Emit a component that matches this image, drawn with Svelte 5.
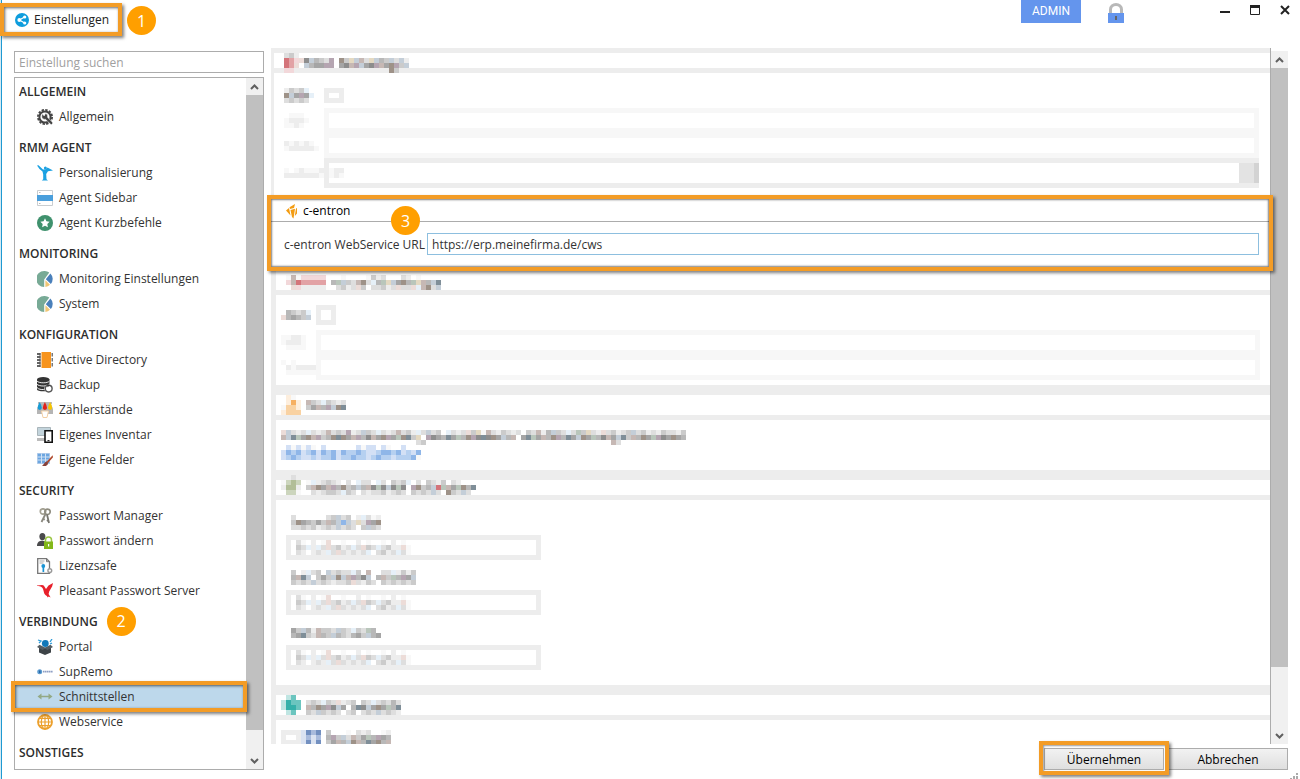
<script>
    let search = '';
    let url = 'https://erp.meinefirma.de/cws';
    let selected = 'Schnittstellen';

    const groups = [
        { title: 'ALLGEMEIN', items: [['Allgemein', 'gear']] },
        { title: 'RMM AGENT', items: [['Personalisierung', 'person'], ['Agent Sidebar', 'sidebar'], ['Agent Kurzbefehle', 'star']] },
        { title: 'MONITORING', items: [['Monitoring Einstellungen', 'pie'], ['System', 'pie']] },
        { title: 'KONFIGURATION', items: [['Active Directory', 'book'], ['Backup', 'backup'], ['Zählerstände', 'printer'], ['Eigenes Inventar', 'devices'], ['Eigene Felder', 'fields']] },
        { title: 'SECURITY', items: [['Passwort Manager', 'keys'], ['Passwort ändern', 'userlock'], ['Lizenzsafe', 'license'], ['Pleasant Passwort Server', 'bird']] },
        { title: 'VERBINDUNG', badge: 2, items: [['Portal', 'portal'], ['SupRemo', 'supremo'], ['Schnittstellen', 'arrows'], ['Webservice', 'globe']] },
        { title: 'SONSTIGES', items: [] }
    ];

    const icons = {
        gear: '<circle cx="8" cy="8" r="5.6" fill="none" stroke="#444" stroke-width="2"/><circle cx="8" cy="8" r="7.1" fill="none" stroke="#444" stroke-width="1.8" stroke-dasharray="2.4 1.32"/><path d="M5.200 4.800l2 2.200 1.300-2.500a3 3 0 0 1 2 3.700l5.500 5.800-1.800 1.800-5.700-5.500A3 3 0 0 1 4.800 7z" fill="#444" stroke="#fff" stroke-width=".5"/>',
        person: '<path d="M0 .5l1.500-.2L6 4.500l3-.2 1.500-1.800L16 5.500l-5 .8-1.800 2.700.3 5.300 1.500 1.200H4.800l1.400-1.200V9.500L5.500 6.500 2.500 4z" fill="#1ba1e2"/><circle cx="8.400" cy="3" r="1.500" fill="#1ba1e2"/>',
        sidebar: '<path d="M.5.5h15v15H.5z" fill="#fff" stroke="#c9cdd0"/><path d="M0 5h16v6H0z" fill="#4a9fdc"/><path d="M2 2.5h1.500M2 13.500h1.500" stroke="#bbb"/>',
        star: '<circle cx="8" cy="8" r="8" fill="#3f916d"/><path d="M8 3.300l1.400 3 3.200.4-2.300 2.300.6 3.300L8 10.800l-2.900 1.500.6-3.300-2.300-2.300 3.200-.4z" fill="#fff"/>',
        pie: '<path d="M7.200 0A8 8 0 0 0 7.200 16V8.400L12.300 1.600A8 8 0 0 0 7.200 0z" fill="#78aa96"/><path d="M13.400 2.400a8 8 0 0 1 .5 10.600L8.800 8.200z" fill="#4a80bb"/><path d="M8.400 9.300l4.600 4.500A8 8 0 0 1 8.400 16z" fill="#f0c674"/>',
        book: '<path d="M4.500 0H14v16H4.500z" fill="#f7941d"/><path d="M14.500 1H16v3.500h-1.500zM14.500 6H16v3.500h-1.500zM14.500 11H16v3.500h-1.500z" fill="#777"/><path d="M0 2h3.500M0 5h3.500M0 8h3.500M0 11h3.500M0 14h3.500" stroke="#333" stroke-width="1.500"/><path d="M3 1v14" stroke="#555"/>',
        backup: '<path d="M0 2.500v9.800C0 15 12.500 15 12.500 12.300V2.500z" fill="#333"/><ellipse cx="6.200" cy="2.600" rx="6.200" ry="2.600" fill="#333"/><path d="M0 4c1.500 2.400 11 2.400 12.500 0M0 7.200c1.500 2.400 11 2.400 12.500 0M0 10.500c1.500 2.400 7 2.400 8 1.600" fill="none" stroke="#fff" stroke-width=".9"/><circle cx="11.700" cy="11.600" r="4.400" fill="#fff"/><circle cx="11.700" cy="11.600" r="3.400" fill="none" stroke="#555" stroke-width="1.400"/><path d="M10 6.800l3 1.400-2.400 2z" fill="#333"/>',
        printer: '<path d="M2 2h12l2 5v5H0V7z" fill="#b5b5b5"/><path d="M1 0h14v2H1z" fill="#bbb"/><path d="M2.700 0q4.200 7.500 0 8-4.200-.5 0-8z" fill="#169bd5"/><path d="M7.900 0q4.200 7.500 0 8-4.200-.5 0-8z" fill="#e2231a"/><path d="M13.100 0q4.200 7.500 0 8-4.200-.5 0-8z" fill="#f6c500"/><path d="M4.500 9h7L10 15.500H6z" fill="#fff" stroke="#f3cfa4"/>',
        devices: '<path d="M.5.5h13v8H.5z" fill="#c3d4dc" stroke="#a9b5ba"/><path d="M0 11h8v3H0z" fill="#bbb"/><path d="M8 3.800h7.200V15.200H8z" fill="#fff" stroke="#111" stroke-width="1.600"/><path d="M10.500 13.600h2" stroke="#111"/>',
        fields: '<path d="M.5 1.500h12v10H.5z" fill="#6ca6e0" stroke="#a9c6e8"/><path d="M.5 5h12M.5 8h12M4.500 1.500v10M8.500 1.500v10" stroke="#cfe1f5"/><path d="M15.600 3.200L9.400 10l1.400 1.300 5.200-6z" fill="#b04a2e"/><path d="M9.400 9.600c-2 .4-2 3.200-4.400 3.800 2.600 1.600 6 .2 6-2.200z" fill="#86413a"/>',
        keys: '<circle cx="6" cy="3.500" r="2.700" fill="none" stroke="#a5a294" stroke-width="1.700"/><circle cx="10.500" cy="3.800" r="2.700" fill="none" stroke="#8f8d80" stroke-width="1.700"/><path d="M8.500 6L4.500 14M6 10.800l1.800 1" stroke="#8b897f" stroke-width="1.800"/><path d="M10 6.500l2 8.500M11.800 12l-2 .8" stroke="#77766f" stroke-width="1.800"/>',
        userlock: '<ellipse cx="5.400" cy="3.600" rx="3" ry="3.600" fill="#4a4a4c"/><path d="M0 13c0-4 2.600-5.200 5.400-5.200 1.200 0 2 .2 2.600.6V13z" fill="#4a4a4c"/><path d="M8.500 9V7a3 3 0 0 1 6 0v2" fill="none" stroke="#9cc746" stroke-width="1.500"/><path d="M7 8.500h9V16H7z" fill="#83b81a"/><path d="M11 11h1.200v2.600H11z" fill="#fff"/>',
        license: '<path d="M.7.7h8.800l3 3v11.600H.7z" fill="#fff" stroke="#777" stroke-width="1.300"/><path d="M9.500.7v3h3" fill="none" stroke="#777"/><path d="M2.500 3h5M2.500 5h4" stroke="#aaa"/><circle cx="6.300" cy="8" r="1.900" fill="#1b93d3"/><path d="M5.500 8h1.700v6H5.500z" fill="#1b93d3"/><circle cx="12.800" cy="12.600" r="1.900" fill="#fff" stroke="#999" stroke-width="1.400"/>',
        bird: '<path d="M0 2.400l5-.4c1.400 0 2.200.8 2.700 2L9 6l2.500-3.500L16 0l-.8 3.200-1.400 2.600-1.600 2.700-.6 2.500 2 3.500-2-1-.8 1-1-1.500C6.600 11.500 7 8 5.800 5.500 5 4 4 3 0 2.900z" fill="#e8202b"/>',
        portal: '<path d="M2 7l6 2 6-2v6.500L8 16l-6-2.500z" fill="#3d4347"/><path d="M0 8l2.500-2.200L8 8.500l5.500-2.700L16 8l-5.500 3L8 9.500 5.500 11z" fill="#555d62"/><circle cx="8.300" cy="4.500" r="3.400" fill="#1177b8"/><path d="M1 1l3 1-2 2M15 0l-2 3M13 5l2-1" fill="none" stroke="#2b9ad8" stroke-width="1.300"/>',
        supremo: '<circle cx="2.700" cy="7.700" r="2.500" fill="#5b9bd0"/><path d="M2 6.500h1.500v2.500H2z" fill="#2868a5"/><path d="M6 7.600h10" stroke="#8f9fc4" stroke-width="1.600" stroke-dasharray="1.500 .4"/>',
        arrows: '<path d="M2.500 7.500h11" stroke="#93a985" stroke-width="1.500"/><path d="M4.500 4.500l-4 3 4 3zM11.500 4.500l4 3-4 3z" fill="#93a985"/>',
        globe: '<circle cx="8" cy="8" r="7" fill="#fff" stroke="#eca02c" stroke-width="1.800"/><path d="M8 1v14M1 8h14M2.500 4.300h11M2.500 11.700h11" stroke="#eca02c" stroke-width="1.200"/><ellipse cx="8" cy="8" rx="3.700" ry="7" fill="none" stroke="#eca02c" stroke-width="1.200"/>'
    };

    // one character per 5px cell of an obscured label, '.' stays empty
    const palette = {
        1: '#f8f8f8', 2: '#ededed', 3: '#dedede', 4: '#cbcbcb', 5: '#b8b8b8', 6: '#a5a5a5', 7: '#8d8d8d',
        r: '#c6b8b4', b: '#c4ced8', d: '#7f8e98', y: '#e4d9c2', p: '#b5a5b1', g: '#b9c6bb', n: '#9e9288', l: '#e6f0f8', k: '#ecdcd8',
        R: '#d4747a', Q: '#e2a2a5', P: '#f2d8da',
        O: '#f6b062', N: '#f9d2a2', M: '#fdeedd',
        A: '#8fb6e8', B: '#b6d0f0', C: '#d3e0f5',
        G: '#b2be98', H: '#ccd5bd',
        T: '#35b0a9', U: '#6cc5bf', V: '#bfe5e2',
        S: '#7390c0', W: '#a9bbdc', X: '#dbe3f1'
    };

    const head1 = ['342......................', 'RQPk7b543p.n4ybr3yb54b3b2', 'RQk.b566pp.67rpb67pr6np4b', 'PP.2.................n4..'];
    const head3 = ['1r1PPPPP...1....1423...32.1....', 'PrRQQQQQ.5gb43rn3l5gyb6n5gyr5bd', '.kP22222..3423k4.33423k33klrn3b'];
    const head4 = ['.M1..........', '.MOM.r43l4323', '1NNM.46r5pbnd', 'MNNN.........'];
    const line4 = [
        'kb323l323r343p23b43l323r342l3b34.l323k4y1r324323.43r25b43l3g4y32k34234b3423243324',
        'rbdg6nrp45ndn6rp57r6np6gnd4y.p765d6g5np7d7n6b5r.6dg6r5np5d6bn6g57r6bd4r5n6gp76n65',
        '...........................34.....................................r3.............'
    ];
    const link4 = ['.C1C1C1.C......C1CC.C1..C...', 'CABACBACABACABBABCCBAABACBCA', 'CBABCCBCBBACBBABBCBABBCBBBA1'];
    const head5 = ['..3....................................', '1HGH.1l23432.3.l33.l3.434l.3.4324.32...', '2GG2.4rn6rp5n45b5r7g7b7g7.pn45bRgr6gn5d', '.HH1..323443l43.323342343.4343b3.n43b3.'];
    const label5a = ['.3......34b34.2l312', '.4n65464r5bAb3y3p6n', '.334342343b343.4b43'];
    const label5b = ['.4.2l34.b3433l4.r..33l2424', '.5rdb.464bnbrp57b.5r4g5p6b', '.4343b3432334k3243.4343434'];
    const label5c = ['.64b52r443b43l43g5.', '.56d43r54b543564b56'];
    const value5 = ['.31.2.1k..1..2.1..1.2.1.', '.43l2l3k3423l3k43l3422k1', '.32.232l3k32323l.3423l31'];
    const head6 = ['.VU.....................', 'VTUU.343l43k234.43l34353', 'VTTU.r5n6p7b6.5d7b6n6g5d', '.VU..43b4343.34.343b3432'];
    const head6b = ['4...1.323..12', '5p4b3r46g5p65', '46r5bnr5d6n5r'];

    const tokens = [label5a, label5b, label5c];
</script>

{#snippet mosaic(rows)}
    <svg class="mosaic" width={rows[0].length * 5} height={rows.length * 5} aria-hidden="true">
        {#each rows as row, y}
            {#each row as cell, x}
                {#if palette[cell]}
                    <rect x={x * 5} y={y * 5} width="5" height="5" fill={palette[cell]} />
                {/if}
            {/each}
        {/each}
    </svg>
{/snippet}

{#snippet scrollbar()}
    <div class="scrollbar">
        <button aria-label="Nach oben"><svg width="9" height="6"><path d="M1 5l3.500-3.500L8 5" /></svg></button>
        <div class="thumb"></div>
        <div class="track"></div>
        <button aria-label="Nach unten"><svg width="9" height="6"><path d="M1 1l3.500 3.500L8 1" /></svg></button>
    </div>
{/snippet}

<div class="window">
    <header>
        <div class="tab marked">
            <svg width="14" height="14" viewBox="0 0 14 14">
                <circle cx="7" cy="7" r="7" fill="#0e9ddd" />
                <path d="M9.500 4L4.500 7l5 3" fill="none" stroke="#fff" stroke-width="1.200" />
                <circle cx="4.300" cy="7" r="1.900" fill="#fff" /><circle cx="9.700" cy="4" r="1.600" fill="#fff" /><circle cx="9.700" cy="10" r="1.600" fill="#fff" />
            </svg>
            Einstellungen
        </div>
        <span class="badge">1</span>
        <span class="admin">ADMIN</span>
        <svg class="lock" width="16" height="20" viewBox="0 0 16 20">
            <path d="M2.500 11V6.500a5.500 5 0 0 1 11 0V11" fill="none" stroke="#b8b8b8" stroke-width="3" />
            <path d="M0 10h16v10H0z" fill="#6495ed" /><path d="M7 13h2v4H7z" fill="#666" />
        </svg>
        <div class="controls">
            <button aria-label="Minimieren"><svg width="10" height="10"><path d="M0 7h10" /></svg></button>
            <button aria-label="Maximieren"><svg width="10" height="10"><path d="M.5 0v9.500h9V0" stroke-width="1" /><path d="M0 1.500h10" stroke-width="3" /></svg></button>
            <button aria-label="Schließen"><svg width="10" height="10"><path d="M1 1l8 8M9 1l-8 8" stroke-width="2" /></svg></button>
        </div>
    </header>

    <div class="columns">
        <aside>
            <input class="search" type="text" placeholder="Einstellung suchen" aria-label="Einstellung suchen" bind:value={search} />
            <div class="list">
                <nav>
                    {#each groups as group}
                        <section>
                            <h2>{group.title}{#if group.badge}<span class="badge">{group.badge}</span>{/if}</h2>
                            {#each group.items as [name, icon]}
                                <button class="item" class:selected={selected === name} class:marked={selected === name} on:click={() => (selected = name)}>
                                    <svg width="16" height="16" viewBox="0 0 16 16">{@html icons[icon]}</svg>
                                    {name}
                                </button>
                            {/each}
                        </section>
                    {/each}
                </nav>
                {@render scrollbar()}
            </div>
        </aside>

        <main>
            <div class="settings">
                <div class="panels">
                    <section class="panel first">
                        <h3>{@render mosaic(head1)}</h3>
                        <div class="form wide">
                            <label class="check" for="aktiv1">{@render mosaic(['2434l.', 'nb6p6l', '34343.'])}</label>
                            <input id="aktiv1" class="flat" type="checkbox" />
                            <label for="host">{@render mosaic(['.111.', '12221', '1121.'])}</label>
                            <input id="host" type="text" />
                            <label for="port">{@render mosaic(['212121.', '1222221'])}</label>
                            <input id="port" type="text" />
                            <label for="modus">{@render mosaic(['1.121112.122', '22222221.121'])}</label>
                            <select id="modus"></select>
                        </div>
                    </section>

                    <section class="centron marked">
                        <h3>
                            <svg width="12" height="16" viewBox="0 0 12 16">
                                <path d="M0 7.500L3 5l1.500 7.500zM3.500 4.300L9 1 8 5l-4 1zM4.500 7l4.500-1.200L7.500 15.500 6 14zM10 5.500l1-.5v5.500L8.800 13z" fill="#f39c12" />
                            </svg>
                            c-entron
                        </h3>
                        <span class="badge">3</span>
                        <div class="row">
                            <label for="url">c-entron WebService URL</label>
                            <input id="url" type="text" bind:value={url} />
                        </div>
                    </section>

                    <section class="panel third">
                        <h3>{@render mosaic(head3)}</h3>
                        <div class="form">
                            <label class="check" for="aktiv2">{@render mosaic(['.5434l', 'k5654b'])}</label>
                            <input id="aktiv2" type="checkbox" />
                            <label for="user">{@render mosaic(['11221', '12221', '.1111'])}</label>
                            <input id="user" type="text" />
                            <label for="pass">{@render mosaic(['1.1....', '.212222', '.111111'])}</label>
                            <input id="pass" type="text" />
                        </div>
                    </section>

                    <section class="panel">
                        <h3>{@render mosaic(head4)}</h3>
                        <div class="note">
                            {@render mosaic(line4)}
                            <a href="#anleitung" aria-label="Anleitung">{@render mosaic(link4)}</a>
                        </div>
                    </section>

                    <section class="panel compact">
                        <h3>{@render mosaic(head5)}</h3>
                        <div class="tokens">
                            {#each tokens as label, i}
                                <label for="token{i}">{@render mosaic(label)}</label>
                                <div class="token">
                                    <input id="token{i}" type="text" />
                                    {@render mosaic(value5)}
                                </div>
                            {/each}
                        </div>
                    </section>

                    <section class="panel">
                        <h3>{@render mosaic(head6)}</h3>
                        <div class="last">
                            <input id="tool" type="checkbox" />
                            <label for="tool">
                                {@render mosaic(['XSWS', 'XWXW', 'XSXS'])}
                                {@render mosaic(head6b)}
                            </label>
                        </div>
                    </section>
                </div>
                {@render scrollbar()}
            </div>
            <footer>
                <span class="marked"><button>Übernehmen</button></span>
                <button>Abbrechen</button>
            </footer>
        </main>
    </div>
    <svg class="grip" width="8" height="6"><path d="M6 0h2v2H6zM3 3h2v2H3zM6 3h2v2H6zM0 5h2v1H0zM3 5h2v1H3zM6 5h2v1H6z" fill="#aaa" /></svg>
</div>

<style>
    :global(body) {
        margin: 0;
        background: #fff;
    }

    .window {
        position: relative;
        box-sizing: border-box;
        height: 100vh;
        display: flex;
        flex-direction: column;
        padding: 0 12px 9px 14px;
        background: linear-gradient(to right, #d5e9f3 1px, #1f9ad2 1px 2px, #fff 2px);
        overflow: hidden;
        color: #333;
        font-family: "Open Sans", "Noto Sans", sans-serif;
        font-size: 12px;
        line-height: 16px;
    }

    .window * {
        box-sizing: border-box;
    }

    button, input, select {
        margin: 0;
        padding: 0;
        border: 0;
        border-radius: 0;
        background: none;
        color: inherit;
        font: inherit;
        appearance: none;
    }

    svg {
        display: block;
        flex: none;
    }

    .mosaic {
        shape-rendering: crispEdges;
    }

    h2, h3 {
        margin: 0;
        font-size: 12px;
    }

    /* orange frame round a step of the guide */
    .marked {
        position: relative;
    }

    .marked::after {
        content: "";
        position: absolute;
        inset: -4px;
        z-index: 2;
        border: 4px solid #f39c26;
        box-shadow: 2px 2px 3px rgba(0, 0, 0, .5), inset 1px 1px 3px rgba(0, 0, 0, .6);
        pointer-events: none;
    }

    .badge {
        display: flex;
        align-items: center;
        justify-content: center;
        width: 29px;
        height: 29px;
        border-radius: 50%;
        background: #ff9f00;
        color: #fff;
        font: 16px "Open Sans", sans-serif;
    }

    header {
        flex: none;
        display: flex;
        align-items: flex-start;
        height: 48px;
    }

    .tab {
        display: flex;
        align-items: center;
        gap: 5px;
        height: 25px;
        margin: 7px 9px 0 -10px;
        padding: 0 9px 0 11px;
        color: #222;
    }

    header .badge {
        margin-top: 6px;
    }

    .admin {
        width: 60px;
        height: 23px;
        margin-left: auto;
        background: #6495ed;
        color: #fff;
        font-family: Roboto, sans-serif;
        line-height: 22px;
        text-align: center;
    }

    .lock {
        margin: 3px 0 0 27px;
    }

    .controls {
        display: flex;
        gap: 20px;
        margin: 5px -2px 0 96px;
    }

    .controls path {
        fill: none;
        stroke: #222;
    }

    .controls button:first-child path {
        stroke-width: 2;
    }

    .columns {
        flex: 1;
        min-height: 0;
        display: grid;
        grid-template-columns: 250px minmax(0, 1fr);
        gap: 7px;
    }

    aside {
        display: flex;
        flex-direction: column;
        gap: 4px;
        min-height: 0;
        padding-top: 3px;
    }

    .search {
        height: 22px;
        padding: 0 4px;
        border: 1px solid #acacac;
    }

    .search::placeholder {
        color: #a0a0a0;
    }

    .list {
        flex: 1;
        display: flex;
        min-height: 0;
        border: 1px solid #acacac;
    }

    nav {
        flex: 1;
        min-width: 0;
    }

    nav section {
        padding-bottom: 5px;
    }

    h2 {
        display: flex;
        align-items: center;
        gap: 9px;
        height: 26px;
        padding: 2px 0 0 4px;
        font-weight: 600;
        color: #2d2d2d;
    }

    h2 .badge {
        margin: -4px 0 -2px;
    }

    .item {
        display: flex;
        align-items: center;
        gap: 6px;
        width: 100%;
        height: 25px;
        padding-left: 22px;
        text-align: left;
    }

    .selected {
        background: #bdd8eb;
    }

    .item.marked::after {
        inset: -3px -1px -3px -4px;
    }

    .scrollbar {
        flex: none;
        display: flex;
        flex-direction: column;
        width: 17px;
        background: #f0f0f0;
    }

    .scrollbar button {
        height: 17px;
        display: flex;
        align-items: center;
        justify-content: center;
    }

    .scrollbar path {
        fill: none;
        stroke: #606060;
        stroke-width: 2;
    }

    .thumb {
        flex: 29;
        background: #c0c0c0;
    }

    .track {
        flex: 1;
    }

    .settings .thumb {
        flex: 10;
    }

    main {
        display: flex;
        flex-direction: column;
        min-height: 0;
    }

    .settings {
        flex: 1;
        display: flex;
        min-height: 0;
    }

    .settings .scrollbar {
        margin-top: 3px;
    }

    .panels {
        flex: 1;
        min-width: 0;
        overflow-y: clip;
        border-right: 1px solid #acacac;
    }

    .panel {
        border-left: 5px solid #ededed;
    }

    h3 {
        display: flex;
        align-items: flex-end;
        font-weight: 400;
    }

    .panel h3 {
        height: 35px;
        padding-left: 5px;
        border: solid #ededed;
        border-width: 10px 0 5px;
    }

    .compact h3 {
        height: 30px;
    }

    .first {
        height: 147px;
        border-left-width: 3px;
    }

    .first h3 {
        height: 25px;
        padding-left: 10px;
        border-top-width: 5px;
        align-items: flex-start;
    }

    .form {
        display: grid;
        grid-template-columns: 35px 1fr;
        padding: 10px 10px 5px 5px;
    }

    .form.wide {
        grid-template-columns: 40px 1fr;
        padding: 15px 11px 7px 10px;
    }

    .form label {
        position: relative;
        z-index: 1;
        display: flex;
        align-items: center;
        width: 0;
    }

    .form input[type=text] {
        height: 25px;
        border: 5px solid #f7f7f7;
    }

    .form select {
        height: 30px;
        border: 5px solid #ededed;
        border-right-width: 0;
        background: linear-gradient(to left, #d3d3d3 5px, #e3e3e3 5px, #e3e3e3 20px, transparent 20px);
    }

    input[type=checkbox] {
        width: 20px;
        height: 20px;
        margin-bottom: 5px;
        border: 5px solid #ededed;
    }

    .form input.flat {
        height: 15px;
    }

    .form .check {
        margin-bottom: 5px;
    }

    .centron {
        height: 76px;
    }

    .centron.marked::after {
        inset: 0 -3px 0 -4px;
        box-shadow: 2px 2px 3px rgba(0, 0, 0, .5), inset 0 0 2px 1px rgba(0, 0, 0, .5);
    }

    .centron h3 {
        align-items: center;
        gap: 5px;
        height: 27px;
        padding: 6px 0 0 15px;
        border-bottom: 1px solid #acacac;
        color: #000;
    }

    .centron .badge {
        position: absolute;
        left: 120px;
        top: 11px;
        z-index: 3;
    }

    .row {
        display: flex;
        align-items: center;
        gap: 2px;
        padding: 11px 11px 0 13px;
    }

    .row label {
        padding-top: 1px;
    }

    .row input {
        flex: 1;
        height: 22px;
        padding: 1px 4px 0;
        border: 1px solid #8dbfdf;
    }

    .third h3 {
        height: 24px;
        padding-left: 10px;
        border-top-width: 0;
    }

    .note {
        height: 50px;
        padding: 10px 0 0 5px;
    }

    .tokens {
        padding: 10px 0 10px 10px;
    }

    .tokens label {
        display: flex;
        align-items: center;
        height: 25px;
    }

    .token {
        display: grid;
        align-items: center;
        width: 255px;
        margin-bottom: 5px;
    }

    .token > :global(*) {
        grid-area: 1 / 1;
    }

    .token input {
        height: 25px;
        border: 5px solid #ededed;
    }

    .token .mosaic {
        margin-left: 5px;
    }

    .last {
        display: flex;
        padding: 10px 0 0 5px;
    }

    .last label {
        display: flex;
        gap: 5px;
    }

    .last input {
        height: 15px;
    }

    footer {
        flex: none;
        display: flex;
        justify-content: flex-end;
        gap: 4px;
        padding-top: 4px;
    }

    footer .marked::after {
        inset: -7px -5px -5px;
        box-shadow: 2px 2px 3px rgba(0, 0, 0, .5), inset 1px 1px 2px rgba(0, 0, 0, .4);
    }

    footer button {
        display: block;
        width: 120px;
        height: 22px;
        padding-top: 1px;
        border: 1px solid #acacac;
        background: linear-gradient(#f2f2f2, #dfdfdf);
        color: #000;
    }

    .grip {
        position: absolute;
        right: 2px;
        bottom: 0;
    }
</style>
